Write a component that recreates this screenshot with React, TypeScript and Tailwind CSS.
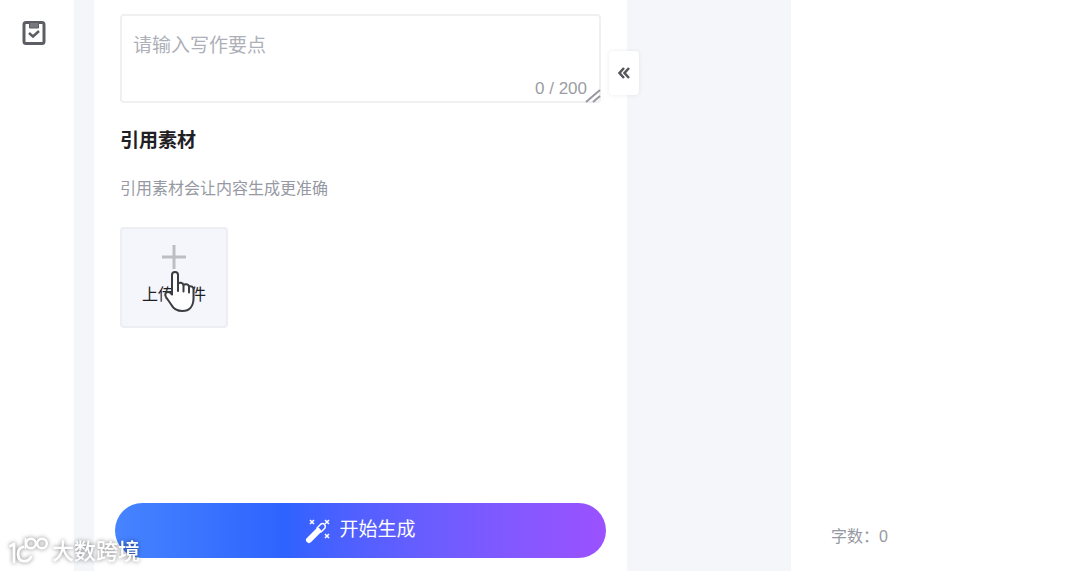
import { useState } from "react"

const MAX_LENGTH = 200

function ClipboardCheckIcon() {
  return (
    <svg viewBox="0 0 24 26" className="h-[26px] w-6" fill="none" stroke="#5c5e63" aria-hidden="true">
      <rect x="2" y="2.5" width="20" height="21" rx="2" strokeWidth="3" />
      <path d="M7.5 2.5h9V8h-9z" fill="#77797e" strokeWidth="1" />
      <path d="M7 13l4 3.500 6-5.500" strokeWidth="2.500" />
    </svg>
  )
}

function WandIcon() {
  return (
    <svg viewBox="0 0 26 26" className="h-[26px] w-[26px]" fill="none" stroke="#fff" aria-hidden="true">
      <path d="M4 22L13 13" strokeWidth="6" strokeLinecap="round" />
      <path d="M12 10l4-4q2-1 3.500.5t.5 3.500l-4 4z" strokeWidth="1.500" strokeLinejoin="round" />
      <path d="M5 2l4 4M9 2L5 6M20 2l4 4M24 2l-4 4M20 16l4 4M24 16l-4 4" strokeWidth="1.500" />
    </svg>
  )
}

function HandPointer() {
  return (
    <svg viewBox="0 0 32 42" className="h-[42px] w-8" fill="#fff" stroke="#3c3d42" strokeWidth="2" strokeLinejoin="round" strokeLinecap="round" aria-hidden="true">
      <path d="M8 23V5c0-4 6-4 6 0v9c1-2 5-1.500 5.500 1 1.500-1.500 5-1 5.500 1.500 2-1 4.500.5 4.500 3V28c0 8-4 13-11 13-5 0-9-2-11-6L2 27c-2-4 1-6 4-4.500l2 2z" />
      <path d="M14 14v7M19.500 15v6.500M25 17v5.500" fill="none" />
    </svg>
  )
}

function WatermarkLogo() {
  return (
    <svg viewBox="0 0 40 30" className="h-[30px] w-10" fill="none" stroke="#fff" strokeWidth="2.800" strokeLinecap="round" strokeLinejoin="round" aria-hidden="true">
      <path d="M2.500 9L6 7v18" />
      <path d="M15 10c-4 1-5 4-5 7 0 9 10 9 13 3" />
      <path d="M17.500 2v9" strokeWidth="2" />
      <circle cx="23" cy="6.500" r="4.800" strokeWidth="2.500" />
      <circle cx="34" cy="6.500" r="4.800" strokeWidth="2.500" />
    </svg>
  )
}

export default function App() {
  const [points, setPoints] = useState("")

  return (
    <div className="flex min-h-screen bg-[#f4f6fa] font-['Liberation_Sans','Noto_Sans_CJK_SC',sans-serif] text-[#1f2024]">
      <nav className="w-[74px] shrink-0 bg-white pt-5 pl-[22px]">
        <button type="button" aria-label="任务" className="block">
          <ClipboardCheckIcon />
        </button>
      </nav>

      <main className="relative ml-5 flex w-[533px] shrink-0 flex-col bg-white pt-3.5 pb-[13px]">
        <div className="px-[26px]">
          <div className="relative">
            <textarea
              aria-label="写作要点"
              placeholder="请输入写作要点"
              maxLength={MAX_LENGTH}
              value={points}
              onChange={(e) => setPoints(e.target.value)}
              className="block h-[89px] w-full resize-none rounded border-2 border-[#f0f0f2] px-[11px] py-4 text-[19px] leading-7 outline-none placeholder:text-[#adb0b8]"
            />
            <span className="absolute right-3.5 bottom-0.5 text-[17px] leading-6 text-[#9b9da3]">
              {points.length} / {MAX_LENGTH}
            </span>
            <svg viewBox="0 0 16 16" className="absolute right-0 bottom-0 h-4 w-4" stroke="#97999e" strokeWidth="2" aria-hidden="true">
              <path d="M1 15L15 3M8 15l7-6" />
            </svg>
          </div>

          <h2 className="mt-6 text-[19px] leading-7 font-bold">引用素材</h2>
          <p className="mt-5 text-base leading-7 text-[#9699a3]">引用素材会让内容生成更准确</p>

          <button
            type="button"
            className="relative mt-6 flex h-[101px] w-[108px] flex-col items-center rounded border-2 border-[#eceef2] bg-[#f5f6fb] pt-4"
          >
            <svg viewBox="0 0 24 24" className="h-6 w-6" stroke="#bcbec3" strokeWidth="3" aria-hidden="true">
              <path d="M12 0v24M0 12h24" />
            </svg>
            <span className="mt-3 text-base leading-7">上传文件</span>
            <span className="absolute top-[41px] left-[42px]">
              <HandPointer />
            </span>
          </button>
        </div>

        <div className="mt-auto px-[21px]">
          <button
            type="button"
            className="flex h-[55px] w-full items-center justify-center gap-2 rounded-full bg-linear-to-r from-[#4684ff] via-[#2f62ff] via-35% to-[#9b51ff] text-[19px] text-white"
          >
            <WandIcon />
            开始生成
          </button>
        </div>

        <button
          type="button"
          aria-label="收起"
          className="absolute top-[51px] -right-3 flex h-11 w-[30px] items-center justify-center rounded bg-white shadow-[0_0_4px_rgba(0,0,0,0.08)]"
        >
          <svg viewBox="0 0 12 12" className="h-3 w-3" fill="none" stroke="#55565a" strokeWidth="2.500" aria-hidden="true">
            <path d="M6 1L1.500 6 6 11M11 1L6.500 6 11 11" />
          </svg>
        </button>
      </main>

      <section className="ml-[164px] flex flex-1 flex-col justify-end bg-white pb-5 pl-10">
        <p className="text-base leading-7 text-[#9699a3]">字数：0</p>
      </section>

      <div className="pointer-events-none fixed bottom-1 left-2 flex items-center gap-1 text-[22px] leading-[30px] font-medium text-white drop-shadow-[0_0_2px_rgba(0,0,0,0.5)]">
        <WatermarkLogo />
        <span>大数跨境</span>
      </div>
    </div>
  )
}
